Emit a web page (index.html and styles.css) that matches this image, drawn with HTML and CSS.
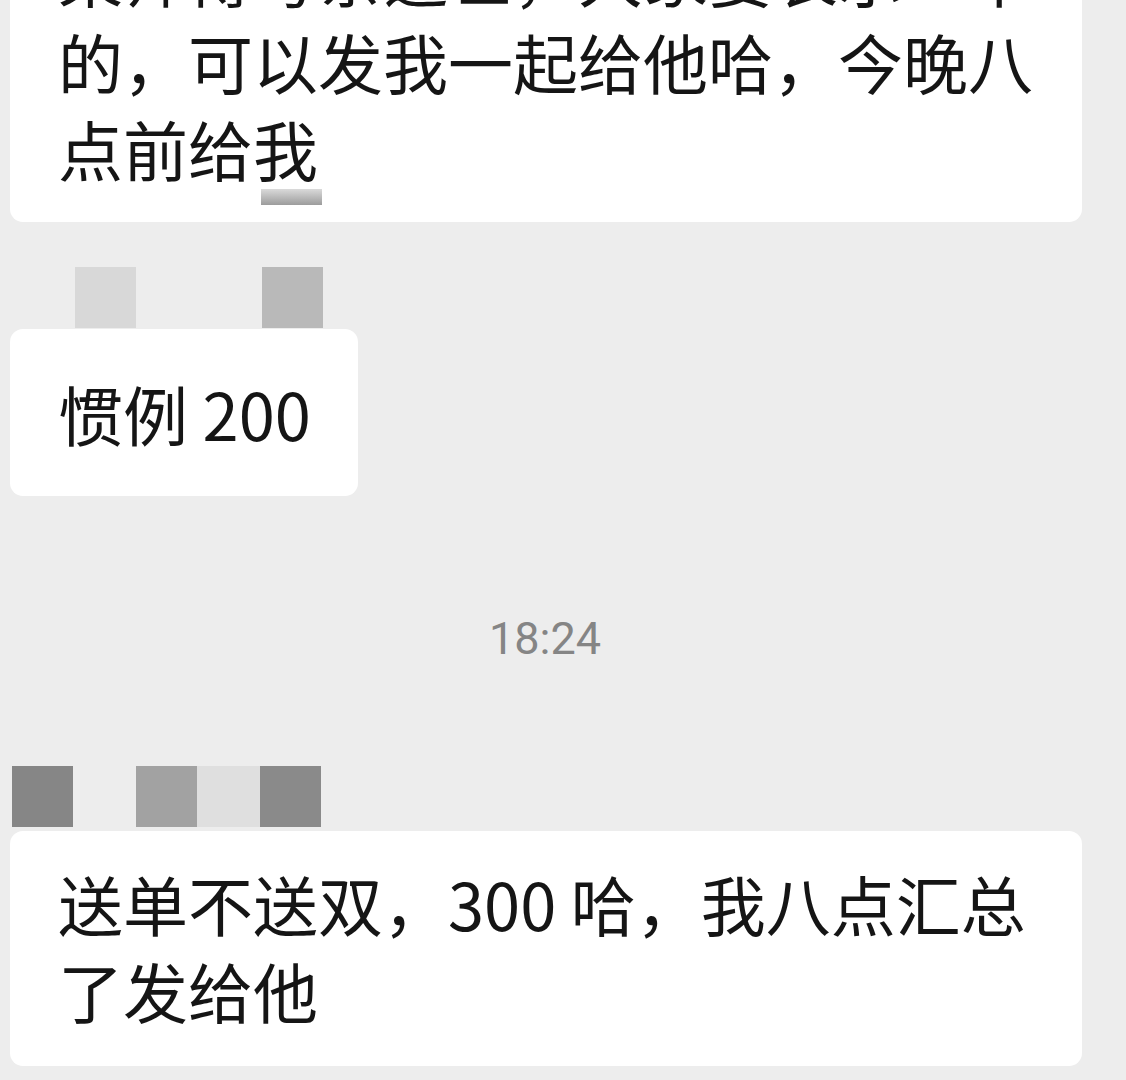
FILE: index.html
```html
<!DOCTYPE html>
<html lang="zh-CN">
<head>
<meta charset="utf-8">
<title>聊天记录</title>
<link rel="stylesheet" href="styles.css">
</head>
<body>
<div class="chat">
  <div class="msg msg-first">
    <div class="bubble bubble-wide">
      <p class="text">某师傅母亲逝世，大家要表示一下的，可以发我一起给他哈，今晚八点前给<span class="mark">我</span></p>
    </div>
  </div>

  <div class="name name-one">
    <span class="px px-a"></span><span class="px px-gap"></span><span class="px px-gap"></span><span class="px px-b"></span>
  </div>
  <div class="msg">
    <div class="bubble bubble-short">
      <p class="text">惯例 200</p>
    </div>
  </div>

  <div class="time">18:24</div>

  <div class="name name-two">
    <span class="px px-c"></span><span class="px px-gap"></span><span class="px px-d"></span><span class="px px-e"></span><span class="px px-f"></span>
  </div>
  <div class="msg">
    <div class="bubble bubble-wide bubble-last">
      <p class="text">送单不送双，300 哈，我八点汇总了发给他</p>
    </div>
  </div>
</div>
</body>
</html>
```

FILE: styles.css
```css
html, body {
  margin: 0;
  padding: 0;
  background: #ededed;
}

body {
  width: 1126px;
  height: 1080px;
  overflow: hidden;
  font-family: "Noto Sans CJK SC", "Noto Sans", sans-serif;
  color: #151515;
}

.chat {
  display: flex;
  flex-direction: column;
  align-items: flex-start;
  padding-left: 10px;
}

.msg {
  display: flex;
}

.msg-first {
  margin-top: -98px;
}

.bubble {
  background: #ffffff;
  border-radius: 13px;
  box-sizing: border-box;
  max-width: 1072px;
}

.bubble-wide {
  width: 1072px;
  padding: 29px 46px 30px 48px;
}

.bubble-last {
  padding-top: 29px;
  padding-bottom: 32px;
}

.bubble-short {
  padding: 41px 47px 39px 48px;
  margin-top: 1px;
}

.text {
  margin: 0;
  font-size: 65px;
  line-height: 87px;
  letter-spacing: 0;
}

.mark {
  position: relative;
}

.mark::after {
  content: "";
  position: absolute;
  left: 8px;
  right: -4px;
  top: 88px;
  height: 16px;
  background: linear-gradient(#dadada, #9c9c9c);
}

.name {
  display: flex;
  height: 61px;
}

.name-one {
  margin-top: 45px;
  padding-left: 65px;
}

.name-two {
  margin-top: 105px;
  margin-bottom: 4px;
  padding-left: 2px;
}

.px {
  display: block;
  width: 61px;
  height: 61px;
}

.px-gap { width: 63px; }
.px-a { background: #d8d8d8; }
.px-b { background: #b9b9b9; }
.px-c { background: #868686; }
.px-d { background: #a2a2a2; }
.px-e { background: #dfdfdf; width: 63px; }
.px-f { background: #8a8a8a; }

.time {
  align-self: stretch;
  margin-top: 121px;
  padding-right: 46px;
  text-align: center;
  font-family: Roboto, "Noto Sans", sans-serif;
  font-size: 45px;
  line-height: 44px;
  color: #858585;
}
```
